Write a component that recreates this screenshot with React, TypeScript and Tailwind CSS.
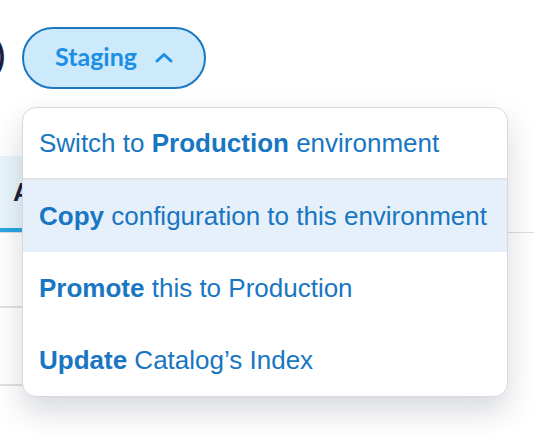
import { useState } from "react";

const items = [
  { key: "switch", before: "Switch to ", bold: "Production", after: " environment" },
  { key: "copy", before: "", bold: "Copy", after: " configuration to this environment" },
  { key: "promote", before: "", bold: "Promote", after: " this to Production" },
  { key: "update", before: "", bold: "Update", after: " Catalog’s Index" },
];

export default function App() {
  const [hovered, setHovered] = useState("copy");

  return (
    <div className="relative h-[434px] w-[534px] overflow-hidden bg-white font-['Liberation_Sans',Arial,sans-serif]">
      {/* Header row */}
      <div className="flex h-[116px] items-start pt-[27px]">
        <span className="-ml-[8px] mt-[8px] w-[13px] text-right text-[34px] leading-[40px] font-bold text-[#1b1f3b] font-['Lato',sans-serif]">
          )
        </span>
        <button className="ml-[17px] flex h-[62px] w-[184px] items-center justify-center gap-[18px] rounded-full border-2 border-[#1a78c2] bg-[#cde9fc] pb-[2px] font-['Lato',sans-serif] text-[25px] font-bold text-[#1a8fe3]">
          Staging
          <svg width="18" height="11" viewBox="0 0 18 11" fill="none" className="mt-[1px]">
            <path d="M2 9L9 2.5L16 9" stroke="#1a8fe3" strokeWidth="3" strokeLinecap="round" strokeLinejoin="round" />
          </svg>
        </button>
      </div>

      {/* Tabs behind the menu */}
      <div className="mt-[40px] border-b border-[#d9dde1]">
        <div className="flex h-[76px] w-[180px] items-center border-b-[4px] border-[#2aa6e2] bg-[#e9f5fb] pl-[13px] text-[26px] font-bold text-[#1b1f3b]">
          Account
        </div>
      </div>
      <div className="mt-[73px] w-[420px] border-b-2 border-[#dde1e4]" />
      <div className="mt-[76px] w-[420px] border-b-2 border-[#dde1e4]" />

      {/* Dropdown menu */}
      <div className="absolute left-[22px] top-[107px] w-[486px] overflow-hidden rounded-[14px] border border-[#d6dadf] bg-white shadow-[0_14px_30px_rgba(30,40,60,0.18)]">
        {items.map((item, i) => (
          <div
            key={item.key}
            onMouseEnter={() => setHovered(item.key)}
            className={`flex h-[72px] items-center pl-[16px] text-[26px] text-[#1876c2] ${
              i === 0 ? "border-b-2 border-[#dfe2e6]" : ""
            } ${hovered === item.key ? "bg-[#e6f0fa]" : ""}`}
          >
            <span>
              {item.before}
              <span className="font-bold">{item.bold}</span>
              {item.after}
            </span>
          </div>
        ))}
      </div>
    </div>
  );
}
